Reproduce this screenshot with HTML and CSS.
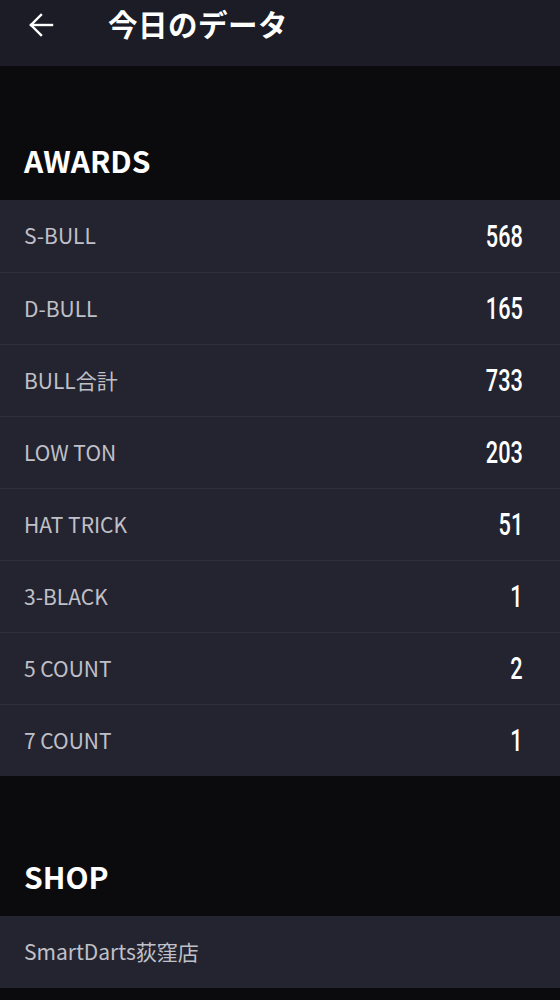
FILE: index.html
```html
<!DOCTYPE html>
<html lang="ja">
<head>
<meta charset="utf-8">
<link rel="stylesheet" href="styles.css">
</head>
<body>
<header class="appbar">
  <svg class="back" width="26" height="26" viewBox="0 0 26 26" fill="none" stroke="#fff" stroke-width="2.4" stroke-linecap="square">
    <path d="M3 13H24"/>
    <path d="M13 3L3 13L13 23"/>
  </svg>
  <h1 class="title">今日のデータ</h1>
</header>
<section class="section first">
  <h2 class="heading">AWARDS</h2>
  <ul class="list">
    <li class="row"><span class="label">S-BULL</span><span class="num">568</span></li>
    <li class="row"><span class="label">D-BULL</span><span class="num">165</span></li>
    <li class="row"><span class="label">BULL合計</span><span class="num">733</span></li>
    <li class="row"><span class="label">LOW TON</span><span class="num">203</span></li>
    <li class="row"><span class="label">HAT TRICK</span><span class="num">51</span></li>
    <li class="row"><span class="label">3-BLACK</span><span class="num">1</span></li>
    <li class="row"><span class="label">5 COUNT</span><span class="num">2</span></li>
    <li class="row"><span class="label">7 COUNT</span><span class="num">1</span></li>
  </ul>
</section>
<section class="section second">
  <h2 class="heading">SHOP</h2>
  <ul class="list">
    <li class="row"><span class="label">SmartDarts荻窪店</span></li>
  </ul>
</section>
</body>
</html>
```
FILE: styles.css
```css
html, body {
  margin: 0;
  padding: 0;
  background: #0b0b0e;
  font-family: "Noto Sans", "Noto Sans CJK JP", sans-serif;
  color: #fff;
}
.appbar {
  height: 66px;
  background: #1b1c25;
  display: flex;
  align-items: center;
  padding: 0 0 0 28px;
  box-sizing: border-box;
}
.back {
  display: block;
  margin-top: -17px;
}
.title {
  margin: 0 0 0 54px;
  font-size: 29.5px;
  font-weight: 700;
  line-height: 1;
  margin-top: -18px;
  font-family: "Noto Sans CJK JP", sans-serif;
  letter-spacing: 0.5px;
}
.section.first { padding-top: 56px; }
.section.second { padding-top: 62px; }
.heading {
  margin: 0;
  height: 78px;
  box-sizing: border-box;
  display: flex;
  align-items: center;
  padding: 0 0 3px 24px;
  font-size: 30px;
  font-weight: 700;
  line-height: 1;
  font-family: "Noto Sans CJK JP", sans-serif;
}
.list {
  list-style: none;
  margin: 0;
  padding: 0;
  background: #242430;
}
.row {
  height: 72px;
  box-sizing: border-box;
  display: flex;
  align-items: center;
  justify-content: space-between;
  padding: 0 37px 0 24px;
  border-top: 1px solid #30303c;
}
.row:first-child { border-top: none; }
.label {
  font-size: 21px;
  color: #c0c0c8;
  font-family: "Noto Sans CJK JP", sans-serif;
  margin-top: -2px;
}
.num {
  display: inline-block;
  font-family: Roboto, sans-serif;
  font-weight: 500;
  font-size: 31px;
  color: #fff;
  transform: scaleX(0.7);
  transform-origin: right center;
}
```
